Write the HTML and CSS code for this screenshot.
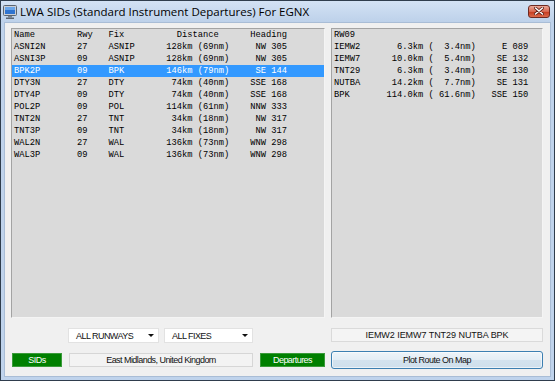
FILE: index.html
```html
<!DOCTYPE html>
<html>
<head>
<meta charset="utf-8">
<link rel="stylesheet" href="styles.css">
</head>
<body>
<div class="window">
  <div class="titlebar">
    <svg class="app-icon" width="14" height="14" viewBox="0 0 14 14">
      <rect x="0.5" y="0.5" width="13" height="10" rx="1" fill="#c9ced6" stroke="#5a6470"/>
      <rect x="2" y="2" width="10" height="7" fill="#2f74d0"/>
      <rect x="2" y="2" width="10" height="3" fill="#6aa6ea"/>
      <rect x="5" y="11" width="4" height="1.5" fill="#7b838d"/>
      <rect x="3" y="12.5" width="8" height="1.5" fill="#5a6470"/>
    </svg>
    <span class="title">LWA SIDs (Standard Instrument Departures) For EGNX</span>
    <div class="close-btn">
      <svg width="10" height="8" viewBox="0 0 10 8">
        <path d="M1.5 1 L8.5 7 M8.5 1 L1.5 7" stroke="#5b1a12" stroke-width="3" stroke-linecap="round"/>
        <path d="M1.5 1 L8.5 7 M8.5 1 L1.5 7" stroke="#ffffff" stroke-width="1.6" stroke-linecap="round"/>
      </svg>
    </div>
  </div>
  <div class="client">
    <div class="list sid-list">
      <div class="sid-row header"><span>Name</span><span>Rwy</span><span>Fix</span><span class="dist-head">Distance</span><span class="r">Heading</span></div>
      <div class="sid-row"><span>ASNI2N</span><span>27</span><span>ASNIP</span><span class="r">128km (69nm)</span><span class="r">NW 305</span></div>
      <div class="sid-row"><span>ASNI3P</span><span>09</span><span>ASNIP</span><span class="r">128km (69nm)</span><span class="r">NW 305</span></div>
      <div class="sid-row selected"><span>BPK2P</span><span>09</span><span>BPK</span><span class="r">146km (79nm)</span><span class="r">SE 144</span></div>
      <div class="sid-row"><span>DTY3N</span><span>27</span><span>DTY</span><span class="r">74km (40nm)</span><span class="r">SSE 168</span></div>
      <div class="sid-row"><span>DTY4P</span><span>09</span><span>DTY</span><span class="r">74km (40nm)</span><span class="r">SSE 168</span></div>
      <div class="sid-row"><span>POL2P</span><span>09</span><span>POL</span><span class="r">114km (61nm)</span><span class="r">NNW 333</span></div>
      <div class="sid-row"><span>TNT2N</span><span>27</span><span>TNT</span><span class="r">34km (18nm)</span><span class="r">NW 317</span></div>
      <div class="sid-row"><span>TNT3P</span><span>09</span><span>TNT</span><span class="r">34km (18nm)</span><span class="r">NW 317</span></div>
      <div class="sid-row"><span>WAL2N</span><span>27</span><span>WAL</span><span class="r">136km (73nm)</span><span class="r">WNW 298</span></div>
      <div class="sid-row"><span>WAL3P</span><span>09</span><span>WAL</span><span class="r">136km (73nm)</span><span class="r">WNW 298</span></div>
    </div>
    <div class="list route-list">
      <div class="rt-row"><span>RW09</span></div>
      <div class="rt-row"><span>IEMW2</span><span class="r">6.3km</span><span class="r">(  3.4nm)</span><span class="r">E 089</span></div>
      <div class="rt-row"><span>IEMW7</span><span class="r">10.0km</span><span class="r">(  5.4nm)</span><span class="r">SE 132</span></div>
      <div class="rt-row"><span>TNT29</span><span class="r">6.3km</span><span class="r">(  3.4nm)</span><span class="r">SE 130</span></div>
      <div class="rt-row"><span>NUTBA</span><span class="r">14.2km</span><span class="r">(  7.7nm)</span><span class="r">SE 131</span></div>
      <div class="rt-row"><span>BPK</span><span class="r">114.0km</span><span class="r">( 61.6nm)</span><span class="r">SSE 150</span></div>
    </div>

    <div class="filters">
      <div class="combo combo-rwy"><span>ALL RUNWAYS</span><i class="arrow"></i></div>
      <div class="combo combo-fix"><span>ALL FIXES</span><i class="arrow"></i></div>
    </div>
    <div class="route-box">IEMW2 IEMW7 TNT29 NUTBA BPK</div>

    <div class="status">
      <div class="tag tag-sids">SIDs</div>
      <div class="location">East Midlands, United Kingdom</div>
      <div class="tag tag-dep">Departures</div>
    </div>
    <button class="plot-btn">Plot Route On Map</button>
  </div>
</div>
</body>
</html>
```

FILE: styles.css
```css
* { box-sizing: border-box; }
html, body { margin: 0; padding: 0; }
body { width: 555px; height: 381px; overflow: hidden; background: #f0f0f0; }

.window {
  width: 555px;
  height: 381px;
  display: flex;
  flex-direction: column;
  background: #bfd3ec;
  border: 1px solid #2f3d4d;
  padding: 0 3px 3px 3px;
}

.titlebar {
  height: 21px;
  display: flex;
  align-items: center;
  background: linear-gradient(#d3e2f4, #bdd1ea);
  margin: 0 -3px;
  padding: 0 4px 0 2px;
}
.app-icon { flex: none; margin-top: 1px; }
.title {
  margin-left: 3px;
  font-family: "Open Sans", "Noto Sans", sans-serif;
  font-size: 11.5px;
  color: #000;
  white-space: nowrap;
}
.close-btn {
  margin-left: auto;
  width: 22px;
  height: 13px;
  border: 1px solid #6e2a22;
  border-radius: 3px;
  background: linear-gradient(#eba99a, #d8664f 50%, #c4381d 51%, #dc6a4c);
  display: flex;
  align-items: center;
  justify-content: center;
  margin-top: -1px;
}

.client {
  flex: 1;
  background: #f0f0f0;
  border: 1px solid #a9bdd6;
  display: grid;
  grid-template-columns: 314px 212px;
  grid-template-rows: 290px 15px 18px;
  column-gap: 6px;
  row-gap: 9px;
  padding: 5px 0 0 6px;
  align-content: start;
}

.list {
  background: #dadada;
  border: 1px solid #a3a3a3;
  border-right-color: #f4f4f4;
  border-bottom-color: #f4f4f4;
  font-family: "Liberation Mono", "Courier New", monospace;
  font-size: 8.75px;
  line-height: 12px;
  color: #000;
  overflow: hidden;
}

.sid-row {
  display: grid;
  grid-template-columns: 12ch 6ch 11ch 12ch 11ch;
  padding-left: 2px;
  white-space: pre;
}
.sid-row.selected { background: #3399ff; color: #fff; }
.dist-head { padding-left: 2ch; }

.route-list { padding-left: 2px; }
.rt-row {
  display: grid;
  grid-template-columns: 10ch 7ch 10ch 10ch;
  white-space: pre;
  height: 12px;
}

.r { text-align: right; }

.filters {
  display: flex;
  gap: 5px;
  padding-left: 57px;
  margin-top: 1px;
}
.combo {
  height: 15px;
  background: #fff;
  border: 1px solid #e2e2e2;
  display: flex;
  align-items: center;
  padding-left: 7px;
  padding-right: 4px;
  font-family: "Liberation Sans", Arial, sans-serif;
  font-size: 9px;
  letter-spacing: -0.55px;
  color: #111;
}
.combo-rwy { width: 91px; }
.combo-fix { width: 89px; }
.arrow {
  margin-left: auto;
  width: 0; height: 0;
  border-left: 3px solid transparent;
  border-right: 3px solid transparent;
  border-top: 3px solid #111;
}

.route-box {
  height: 14px;
  margin-top: 1px;
  background: #f4f4f4;
  border: 1px solid #dadada;
  font-family: "Liberation Sans", Arial, sans-serif;
  font-size: 9px;
  letter-spacing: -0.05px;
  line-height: 12px;
  text-align: center;
  color: #111;
}

.status {
  display: flex;
  align-items: center;
  gap: 7px;
  padding-left: 1px;
}
.tag, .location {
  height: 14px;
  font-family: "Liberation Sans", Arial, sans-serif;
  font-size: 9px;
  letter-spacing: -0.55px;
  line-height: 12px;
  text-align: center;
}
.tag {
  background: #008000;
  border: 1px solid #3a9a3a;
  color: #fff;
}
.tag-sids { width: 50px; }
.tag-dep { width: 65px; }
.location {
  width: 184px;
  background: #f3f3f3;
  border: 1px solid #d6d6d6;
  color: #111;
}

.plot-btn {
  height: 18px;
  width: 212px;
  padding: 0;
  border: 1px solid #3c7fb1;
  border-radius: 3px;
  background: linear-gradient(#eef4f9, #e3edf5 50%, #d3e2ee 51%, #cfdfec);
  box-shadow: inset 0 0 0 1px rgba(255,255,255,0.6);
  font-family: "Liberation Sans", Arial, sans-serif;
  font-size: 9px;
  letter-spacing: -0.5px;
  color: #111;
}
```
